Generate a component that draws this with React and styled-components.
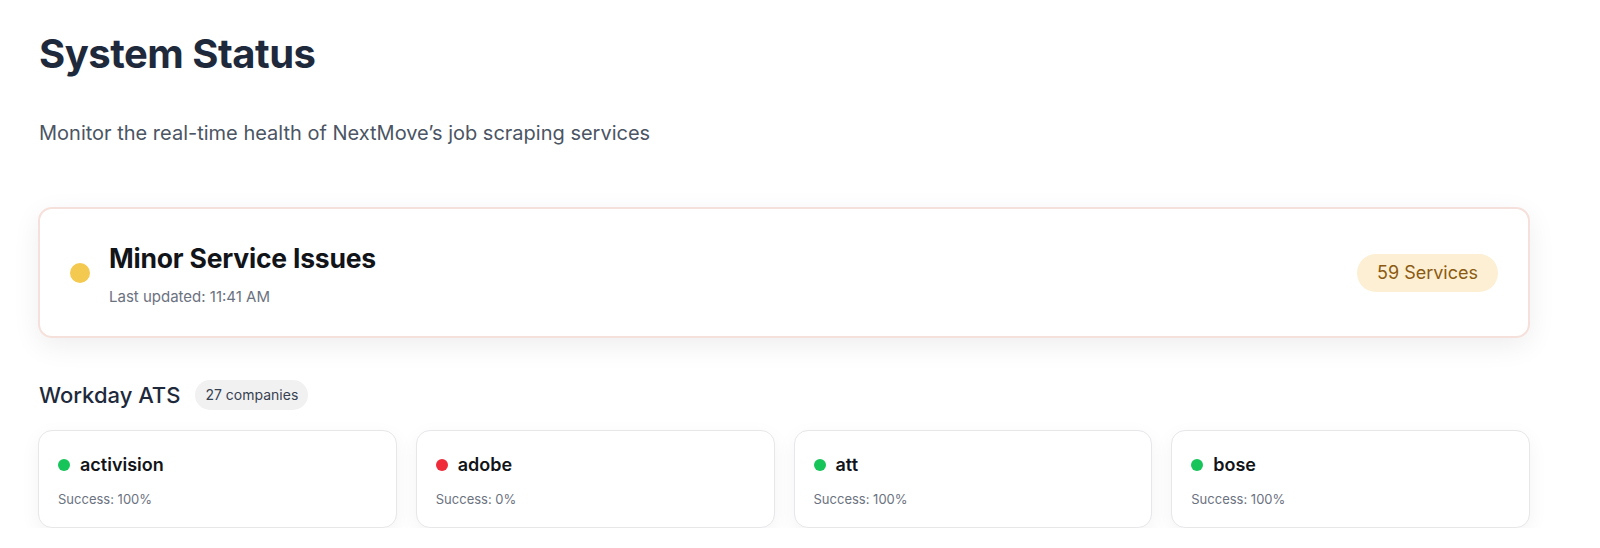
import React from 'react';
import styled, { createGlobalStyle } from 'styled-components';

const GlobalStyle = createGlobalStyle`
  body {
    margin: 0;
    background: #ffffff;
    font-family: 'Inter', 'Noto Sans', sans-serif;
  }
`;

const Page = styled.div`
  width: 1492px;
  padding: 26px 0 0 38px;
`;

const Title = styled.h1`
  margin: 0 0 0 1px;
  font-size: 40px;
  line-height: 56px;
  font-weight: 700;
  letter-spacing: -0.5px;
  color: #1e2a3b;
`;

const Subtitle = styled.p`
  margin: 37px 0 0 1px;
  font-size: 20px;
  line-height: 28px;
  color: #4b5563;
`;

const StatusCard = styled.div`
  margin-top: 60px;
  height: 131px;
  box-sizing: border-box;
  border: 2px solid #f6e0db;
  border-radius: 14px;
  background: #fff;
  box-shadow: 0 8px 28px rgba(0, 0, 0, 0.07);
  display: flex;
  align-items: center;
  padding: 0 30px 0 30px;
`;

const Dot = styled.span`
  flex: none;
  width: ${p => p.size}px;
  height: ${p => p.size}px;
  border-radius: 50%;
  background: ${p => p.color};
`;

const StatusText = styled.div`
  margin-left: 19px;
  flex: 1;
  padding-top: 4px;
`;

const StatusTitle = styled.div`
  font-size: 26.5px;
  line-height: 32px;
  font-weight: 700;
  letter-spacing: -0.2px;
  color: #111418;
`;

const Updated = styled.div`
  margin-top: 13px;
  font-size: 15px;
  line-height: 20px;
  color: #6b7280;
`;

const CountBadge = styled.span`
  background: #fdefd3;
  color: #8b5a12;
  font-size: 18px;
  line-height: 38px;
  padding: 0 20px;
  border-radius: 19px;
`;

const SectionHeader = styled.div`
  margin-top: 42px;
  display: flex;
  align-items: center;
  gap: 15px;
`;

const SectionTitle = styled.h2`
  margin: 0 0 0 1px;
  font-size: 22px;
  line-height: 30px;
  font-weight: 500;
  color: #1e2a3b;
`;

const CountChip = styled.span`
  background: #f1f1f2;
  color: #374151;
  font-size: 14px;
  line-height: 30px;
  padding: 0 10px;
  border-radius: 15px;
`;

const Grid = styled.div`
  margin-top: 20px;
  display: grid;
  grid-template-columns: repeat(4, 1fr);
  gap: 19px;
`;

const Card = styled.div`
  height: 98px;
  box-sizing: border-box;
  border: 1px solid #e7e7ea;
  border-radius: 14px;
  background: #fff;
  box-shadow: 0 6px 20px rgba(0, 0, 0, 0.05);
  padding: 22px 20px 0 19px;
`;

const CardHead = styled.div`
  display: flex;
  align-items: center;
  gap: 10px;
`;

const CardName = styled.span`
  font-size: 18px;
  line-height: 24px;
  font-weight: 600;
  color: #111418;
`;

const Rate = styled.div`
  margin-top: 13px;
  font-size: 13px;
  line-height: 18px;
  color: #6b7280;
`;

const companies = [
  { name: 'activision', rate: 100 },
  { name: 'adobe', rate: 0 },
  { name: 'att', rate: 100 },
  { name: 'bose', rate: 100 },
];

export default function App() {
  return (
    <Page>
      <GlobalStyle />
      <Title>System Status</Title>
      <Subtitle>Monitor the real-time health of NextMove’s job scraping services</Subtitle>

      <StatusCard>
        <Dot size={20} color="#f4c94f" />
        <StatusText>
          <StatusTitle>Minor Service Issues</StatusTitle>
          <Updated>Last updated: 11:41 AM</Updated>
        </StatusText>
        <CountBadge>59 Services</CountBadge>
      </StatusCard>

      <SectionHeader>
        <SectionTitle>Workday ATS</SectionTitle>
        <CountChip>27 companies</CountChip>
      </SectionHeader>

      <Grid>
        {companies.map(c => (
          <Card key={c.name}>
            <CardHead>
              <Dot size={12} color={c.rate > 0 ? '#16c45a' : '#ef2b3a'} />
              <CardName>{c.name}</CardName>
            </CardHead>
            <Rate>Success: {c.rate}%</Rate>
          </Card>
        ))}
      </Grid>
    </Page>
  );
}
